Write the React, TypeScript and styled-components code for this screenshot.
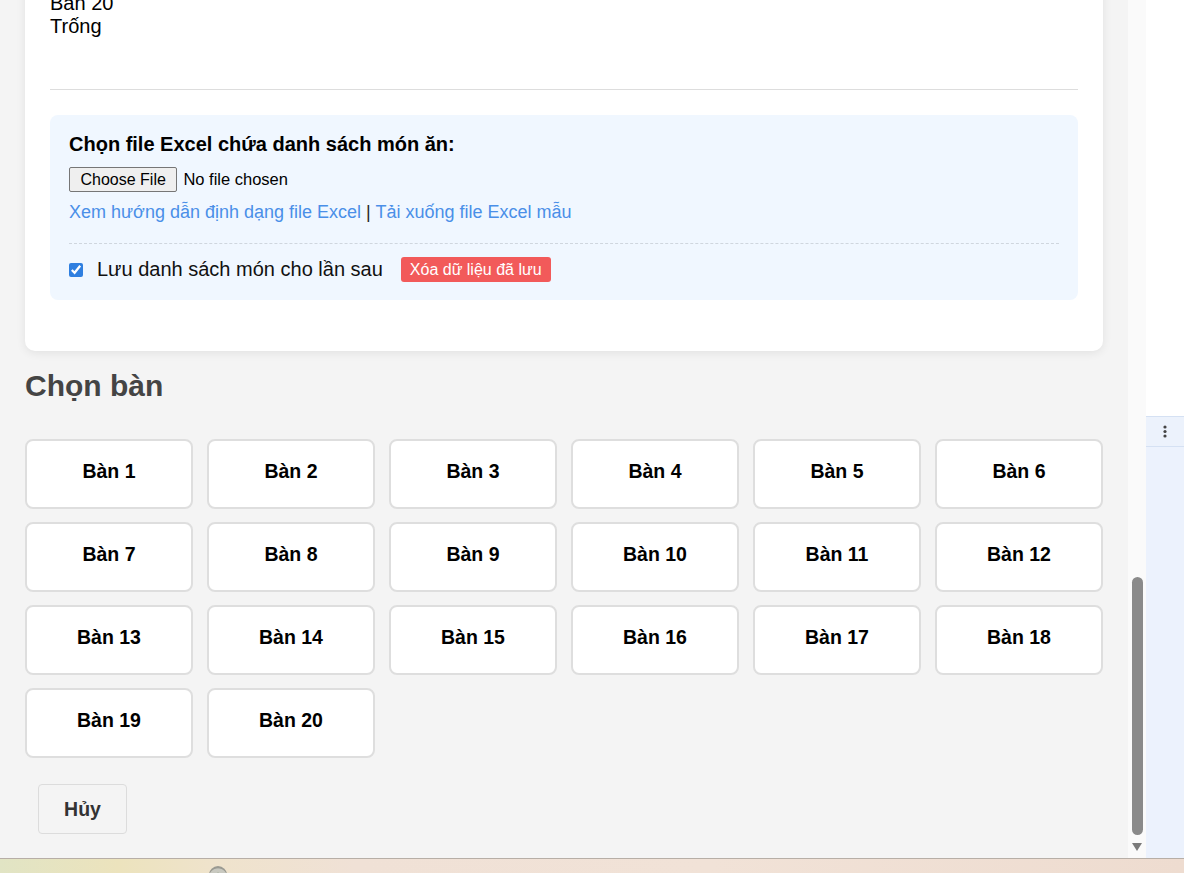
import React from "react";
import styled, { createGlobalStyle } from "styled-components";

const GlobalStyle = createGlobalStyle`
  html, body { margin: 0; padding: 0; }
  body {
    font-family: "Liberation Sans", Arial, sans-serif;
    background: #f4f4f4;
    overflow: hidden;
  }
  * { box-sizing: border-box; }
`;

const Screen = styled.div`
  width: 1184px;
  height: 873px;
  display: flex;
  flex-direction: column;
  overflow: hidden;
`;

const Browser = styled.div`
  height: 858px;
  display: flex;
  flex-direction: row;
  overflow: hidden;
`;

const Viewport = styled.div`
  width: 1128px;
  height: 858px;
  background: #f4f4f4;
  overflow: hidden;
`;

const Page = styled.div`
  padding: 0 25px 24px 25px;
  margin-top: -60px;
`;

const Card = styled.div`
  background: #fff;
  border-radius: 10px;
  box-shadow: 0 2px 10px rgba(0, 0, 0, 0.08);
  padding: 52px 25px 51px 25px;
`;

const TableStatus = styled.div`
  font-size: 20px;
  line-height: 23px;
  color: #000;
`;

const Divider = styled.hr`
  border: none;
  border-top: 1px solid #ddd;
  margin: 51px 0 25px 0;
`;

const UploadBox = styled.div`
  background: #f0f7ff;
  border-radius: 8px;
  padding: 18px 19px 18px 19px;
`;

const UploadTitle = styled.label`
  display: block;
  font-size: 20px;
  font-weight: bold;
  line-height: 23px;
  color: #000;
  margin-bottom: 11px;
`;

const FileInput = styled.input`
  display: block;
  height: 25px;
  font-family: "Liberation Sans", Arial, sans-serif;
  font-size: 16.5px;
  color: #000;

  &::file-selector-button {
    font-family: "Liberation Sans", Arial, sans-serif;
    font-size: 16px;
    height: 25px;
    padding: 1px 10.5px;
    margin-right: 6px;
    background: #efefef;
    border: 1px solid #767676;
    border-radius: 2px;
    color: #000;
  }
`;

const LinkRow = styled.div`
  margin-top: 10px;
  font-size: 18px;
  line-height: 21px;
  color: #222;
`;

const Link = styled.a`
  color: #4a8fe8;
  text-decoration: none;
`;

const SaveRow = styled.div`
  margin-top: 20px;
  padding-top: 13px;
  border-top: 1px dashed #cfd6de;
  display: flex;
  align-items: center;
`;

const Check = styled.input`
  width: 14px;
  height: 14px;
  margin: 0 14px 0 0;
  accent-color: #2f7fe0;
`;

const SaveLabel = styled.span`
  font-size: 20px;
  line-height: 23px;
  color: #111;
  margin-right: 18px;
`;

const DangerButton = styled.button`
  background: #f25a5a;
  color: #fff;
  border: none;
  border-radius: 3px;
  height: 25px;
  padding: 0 9px;
  font-family: "Liberation Sans", Arial, sans-serif;
  font-size: 16px;
`;

const SectionTitle = styled.h2`
  margin: 18px 0 36px 0;
  font-size: 30px;
  line-height: 34px;
  font-weight: bold;
  color: #444;
`;

const TableGrid = styled.div`
  display: grid;
  grid-template-columns: repeat(6, 1fr);
  column-gap: 14px;
  row-gap: 13px;
`;

const TableButton = styled.div`
  height: 70px;
  background: #fff;
  border: 2px solid #dedede;
  border-radius: 8px;
  padding-top: 19px;
  text-align: center;
  font-size: 19.5px;
  line-height: 22px;
  font-weight: bold;
  color: #000;
`;

const CancelButton = styled.button`
  margin: 26px 0 0 13px;
  width: 89px;
  height: 50px;
  background: #f4f4f4;
  border: 1px solid #dcdcdc;
  border-radius: 4px;
  font-family: "Liberation Sans", Arial, sans-serif;
  font-size: 19.5px;
  font-weight: bold;
  color: #333;
`;

const Scrollbar = styled.div`
  width: 18px;
  height: 858px;
  background: #fafafa;
  display: flex;
  flex-direction: column;
  align-items: center;
`;

const Thumb = styled.div<{ $top: number; $size: number }>`
  margin-top: ${(p) => p.$top}px;
  width: 11px;
  height: ${(p) => p.$size}px;
  border-radius: 6px;
  background: #8a8a8a;
`;

const ArrowDown = styled.div`
  margin-top: 8px;
  width: 0;
  height: 0;
  border-left: 5px solid transparent;
  border-right: 5px solid transparent;
  border-top: 8px solid #7a7a7a;
`;

const SidePanel = styled.div`
  width: 38px;
  height: 858px;
  display: flex;
  flex-direction: column;
`;

const SideTop = styled.div`
  height: 417px;
  background: #fff;
  border-bottom: 1px solid #d5e1f3;
`;

const SideMenu = styled.div`
  height: 30px;
  background: #ecf2fc;
  border-bottom: 1px solid #d5e1f3;
  display: flex;
  align-items: center;
  justify-content: center;
`;

const SideRest = styled.div`
  flex: 1;
  background: #ecf2fd;
`;

const Taskbar = styled.div`
  height: 15px;
  border-top: 1px solid #b7aea6;
  background: linear-gradient(90deg, #e1e4c4 0%, #ece3bd 10%, #efe3cc 18%, #f0e1d6 30%, #f1e2d7 60%, #eedcd0 100%);
  padding-left: 209px;
  padding-top: 7px;
`;

const TrayIcon = styled.div`
  width: 18px;
  height: 18px;
  border-radius: 50%;
  background: radial-gradient(circle at 50% 65%, #3e6a32 0 30%, #c9c9c0 36% 60%, #9a9a92 66%);
`;

const tables = Array.from({ length: 20 }, (_, i) => `Bàn ${i + 1}`);

export default function App() {
  return (
    <>
      <GlobalStyle />
      <Screen>
        <Browser>
          <Viewport>
            <Page>
              <Card>
                <TableStatus>Bàn 20</TableStatus>
                <TableStatus>Trống</TableStatus>
                <Divider />
                <UploadBox>
                  <UploadTitle>Chọn file Excel chứa danh sách món ăn:</UploadTitle>
                  <FileInput type="file" accept=".xlsx,.xls" />
                  <LinkRow>
                    <Link href="#">Xem hướng dẫn định dạng file Excel</Link> |{" "}
                    <Link href="#">Tải xuống file Excel mẫu</Link>
                  </LinkRow>
                  <SaveRow>
                    <Check type="checkbox" defaultChecked />
                    <SaveLabel>Lưu danh sách món cho lần sau</SaveLabel>
                    <DangerButton>Xóa dữ liệu đã lưu</DangerButton>
                  </SaveRow>
                </UploadBox>
              </Card>
              <SectionTitle>Chọn bàn</SectionTitle>
              <TableGrid>
                {tables.map((t) => (
                  <TableButton key={t}>{t}</TableButton>
                ))}
              </TableGrid>
              <CancelButton>Hủy</CancelButton>
            </Page>
          </Viewport>
          <Scrollbar>
            <Thumb $top={577} $size={258} />
            <ArrowDown />
          </Scrollbar>
          <SidePanel>
            <SideTop />
            <SideMenu>
              <svg width="4" height="13" viewBox="0 0 4 13">
                <circle cx="2" cy="2" r="1.6" fill="#444" />
                <circle cx="2" cy="6.5" r="1.6" fill="#444" />
                <circle cx="2" cy="11" r="1.6" fill="#444" />
              </svg>
            </SideMenu>
            <SideRest />
          </SidePanel>
        </Browser>
        <Taskbar>
          <TrayIcon />
        </Taskbar>
      </Screen>
    </>
  );
}
